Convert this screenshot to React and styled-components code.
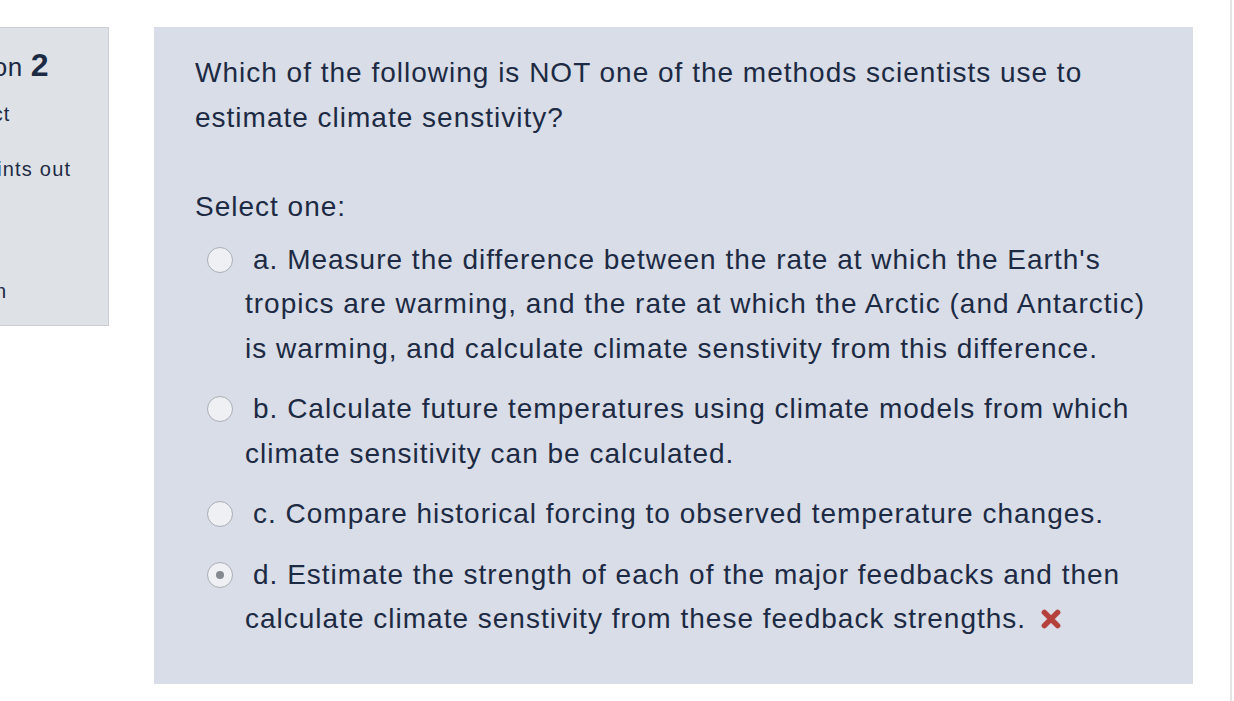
import styled, { createGlobalStyle } from 'styled-components';

const GlobalStyle = createGlobalStyle`
  html, body {
    margin: 0;
    padding: 0;
    background: #ffffff;
    overflow: hidden;
  }
  body {
    font-family: "Liberation Sans", Arial, Helvetica, sans-serif;
    color: #1d2a43;
  }
`;

const Page = styled.div`
  display: flex;
  align-items: flex-start;
  gap: 45px;
  width: 1232px;
  min-height: 100vh;
  border-right: 2px solid #e4e4e6;
  box-sizing: border-box;
  padding-top: 27px;
  overflow: hidden;
`;

const Info = styled.div`
  flex: 0 0 auto;
  margin-left: -100px;
  width: 209px;
  height: 299px;
  box-sizing: border-box;
  background: #dee2e7;
  border: 1px solid #c9ced5;
  padding: 17px 22px 0 21px;
  display: flex;
  flex-direction: column;
  letter-spacing: 1.2px;
`;

const QNo = styled.h3`
  margin: 0 0 0 -8px;
  font-weight: normal;
  font-size: 26px;
  line-height: 40px;
  white-space: nowrap;
  letter-spacing: 0.6px;

  span {
    font-weight: bold;
    font-size: 32px;
  }
`;

const InfoLine = styled.div`
  font-size: 20px;
  line-height: 28px;
  margin-top: ${(p) => p.$gap || 0}px;
`;

const FlagIcon = styled.svg`
  display: inline-block;
  width: 20px;
  height: 20px;
  margin-right: 16px;
  vertical-align: -3px;
`;

const Formulation = styled.div`
  flex: 0 0 auto;
  width: 1039px;
  box-sizing: border-box;
  background: #d8dde7;
  padding: 24px 31px 42px 41px;
  font-size: 28px;
  line-height: 44.5px;
  letter-spacing: 1px;
`;

const QText = styled.p`
  margin: 0 0 45px;
`;

const Prompt = styled.div`
  margin-bottom: 8px;
`;

const Answers = styled.div`
  display: flex;
  flex-direction: column;
  gap: 16px;
`;

const Option = styled.div`
  padding-left: 50px;
  text-indent: -38px;
`;

const Radio = styled.span`
  display: inline-block;
  text-indent: 0;
  width: 26px;
  height: 26px;
  box-sizing: border-box;
  border-radius: 50%;
  border: 1px solid #a9adb4;
  background: #eef0f4;
  vertical-align: -4px;
  margin-right: 20px;
  position: relative;

  &::after {
    content: '';
    display: ${(p) => (p.$checked ? 'block' : 'none')};
    position: absolute;
    left: 50%;
    top: 50%;
    width: 8px;
    height: 8px;
    margin: -4px 0 0 -4px;
    border-radius: 50%;
    background: #858a91;
  }
`;

const Wrong = styled.svg`
  display: inline-block;
  width: 22px;
  height: 22px;
  margin-left: 14px;
  vertical-align: -2px;
`;

const answers = [
  "a. Measure the difference between the rate at which the Earth's tropics are warming, and the rate at which the Arctic (and Antarctic) is warming, and calculate climate senstivity from this difference.",
  'b. Calculate future temperatures using climate models from which climate sensitivity can be calculated.',
  'c. Compare historical forcing to observed temperature changes.',
  'd. Estimate the strength of each of the major feedbacks and then calculate climate senstivity from these feedback strengths.',
];

export default function App() {
  return (
    <>
      <GlobalStyle />
      <Page>
        <Info>
          <QNo>
            Question <span>2</span>
          </QNo>
          <InfoLine $gap={13}>Incorrect</InfoLine>
          <InfoLine $gap={27}>0.00 points out of 1.00</InfoLine>
          <InfoLine $gap={38}>
            <FlagIcon viewBox="0 0 20 20">
              <path d="M4 2 V19" stroke="#6a737d" strokeWidth="2" />
              <path d="M5 3 H16 L13 7 L16 11 H5 Z" fill="#6a737d" />
            </FlagIcon>
            Flag question
          </InfoLine>
        </Info>
        <Formulation>
          <QText>
            Which of the following is NOT one of the methods scientists use to estimate climate senstivity?
          </QText>
          <Prompt>Select one:</Prompt>
          <Answers>
            {answers.map((text, i) => (
              <Option key={i}>
                <Radio $checked={i === 3} />
                {text}
                {i === 3 && (
                  <Wrong viewBox="0 0 20 20">
                    <path
                      d="M4 4 L16 16 M16 4 L4 16"
                      stroke="#b5413d"
                      strokeWidth="5"
                      strokeLinecap="round"
                    />
                  </Wrong>
                )}
              </Option>
            ))}
          </Answers>
        </Formulation>
      </Page>
    </>
  );
}
